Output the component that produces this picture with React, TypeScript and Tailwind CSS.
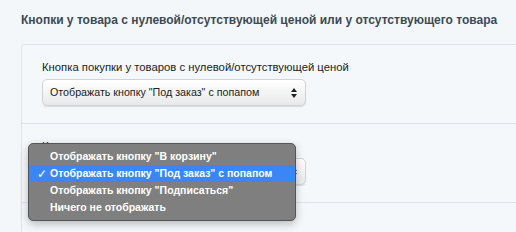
import React from "react";

const options = [
  'Отображать кнопку "В корзину"',
  'Отображать кнопку "Под заказ" с попапом',
  'Отображать кнопку "Подписаться"',
  "Ничего не отображать",
];

function Arrows() {
  return (
    <svg width="6" height="10" viewBox="0 0 6 10" className="shrink-0">
      <path d="M3 0 6 4H0z" fill="#222" />
      <path d="M3 10 0 6h6z" fill="#222" />
    </svg>
  );
}

function FakeSelect({ value }: { value: string }) {
  return (
    <div className="flex h-[27px] w-[264px] items-center justify-between rounded-[5px] border border-[#cfd4d8] bg-gradient-to-b from-white to-[#e8e9ea] pl-[7px] pr-[8px] text-[10.7px] text-[#222] shadow-[0_1px_1px_rgba(0,0,0,0.12)]">
      <span>{value}</span>
      <Arrows />
    </div>
  );
}

export default function App() {
  return (
    <div className="h-[232px] w-[516px] overflow-hidden bg-[#f3f7f9] pl-[21px] pt-[12px] font-['Liberation_Sans',Arial,sans-serif]">
      <h2 className="whitespace-nowrap text-[12px] font-bold leading-[16px] text-[#3c4a55]">
        Кнопки у товара с нулевой/отсутствующей ценой или у отсутствующего товара
      </h2>
      <div className="mt-[16px] w-[520px] rounded-tl-[3px] border border-[#dde5ea] bg-[#f4f8fa]">
        <div className="border-b border-[#dde5ea] pb-[17px] pl-[20px] pt-[15px]">
          <div className="text-[11.3px] leading-[14px] text-[#222]">Кнопка покупки у товаров с нулевой/отсутствующей ценой</div>
          <div className="mt-[5px]">
            <FakeSelect value={options[1]} />
          </div>
        </div>
        <div className="relative border-b border-[#dde5ea] pb-[17px] pl-[20px] pt-[15px]">
          <div className="text-[11.3px] leading-[14px] text-[#222]">Кнопка при отсутствии товара</div>
          <div className="mt-[5px]">
            <FakeSelect value={options[1]} />
          </div>
          <div className="absolute left-[6px] top-[19px] w-[268px] rounded-[5px] border border-[#555] bg-[#7f7f7f] py-[4px] shadow-[0_3px_8px_rgba(0,0,0,0.25)]">
            {options.map((o, i) => (
              <div
                key={o}
                className={`flex h-[17px] items-center whitespace-nowrap text-[10.5px] font-bold text-white ${i === 1 ? "bg-[#3a86f7]" : ""}`}
              >
                <span className="w-[21px] shrink-0 pl-[8px] text-[12px] font-normal">{i === 1 ? "✓" : ""}</span>
                <span>{o}</span>
              </div>
            ))}
          </div>
        </div>
        <div className="h-[40px]" />
      </div>
    </div>
  );
}
